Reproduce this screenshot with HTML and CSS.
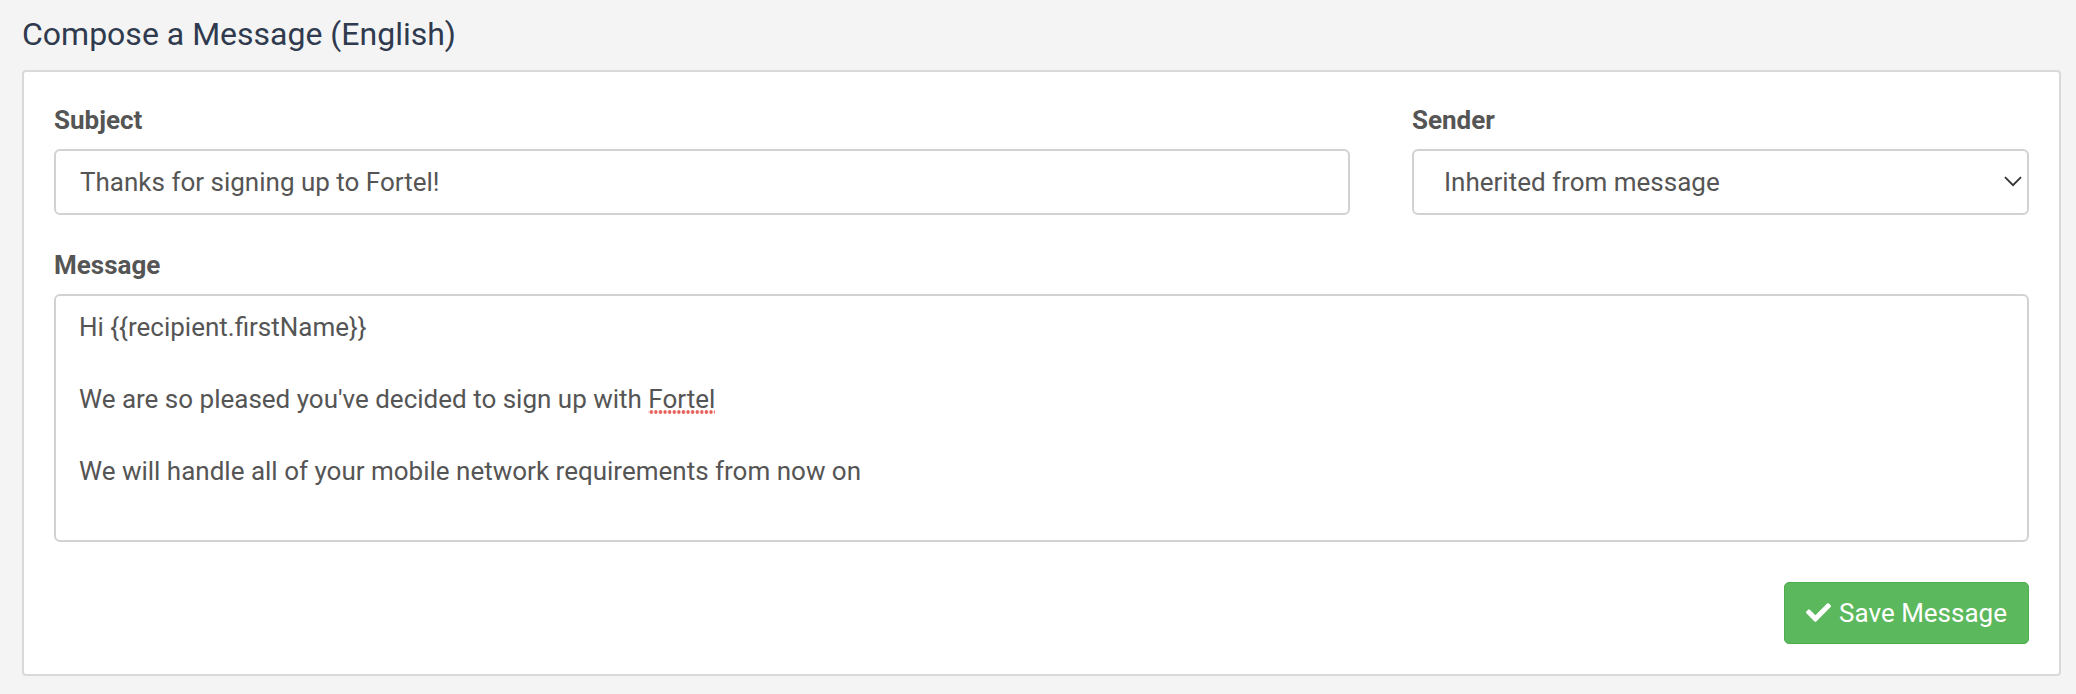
FILE: index.html
```html
<!DOCTYPE html>
<html lang="en">
<head>
<meta charset="utf-8">
<title>Compose a Message (English)</title>
<link rel="stylesheet" href="styles.css">
</head>
<body>
<div class="page">
  <h2 class="title">Compose a Message (English)</h2>
  <div class="card">
    <div class="top-row">
      <div class="field">
        <label class="label" for="subject">Subject</label>
        <input class="control input" id="subject" type="text" value="Thanks for signing up to Fortel!">
      </div>
      <div class="field">
        <label class="label" for="sender">Sender</label>
        <div class="select-wrap">
          <select class="control select" id="sender">
            <option>Inherited from message</option>
          </select>
          <svg class="chevron" width="18" height="11" viewBox="0 0 18 11" aria-hidden="true"><path d="M1 1.2 L9 9.2 L17 1.2" fill="none" stroke="#333" stroke-width="1.8"/></svg>
        </div>
      </div>
    </div>
    <div class="field field-message">
      <label class="label">Message</label>
      <div class="control textarea">Hi {{recipient.firstName}}

We are so pleased you've decided to sign up with <span class="misspelled">Fortel</span>

We will handle all of your mobile network requirements from now on</div>
    </div>
    <div class="actions">
      <button class="btn-save" type="button">
        <svg class="check" width="25" height="19" viewBox="0 64 512 384" aria-hidden="true"><path fill="#fff" d="M173.898 439.404l-166.4-166.4c-9.997-9.997-9.997-26.206 0-36.204l36.203-36.204c9.997-9.998 26.207-9.998 36.204 0L192 312.69 432.095 72.596c9.997-9.997 26.207-9.997 36.204 0l36.203 36.204c9.997 9.997 9.997 26.206 0 36.204l-294.4 294.401c-9.998 9.997-26.207 9.997-36.204-.001z"/></svg>
        <span>Save Message</span>
      </button>
    </div>
  </div>
</div>
</body>
</html>
```

FILE: styles.css
```css
* {
  box-sizing: border-box;
}

html,
body {
  margin: 0;
  padding: 0;
  background: #f4f4f4;
  font-family: Roboto, "Liberation Sans", Arial, sans-serif;
}

.page {
  padding: 15px 15px 18px 22px;
}

.title {
  margin: 0 0 17px 0;
  font-size: 32px;
  line-height: 38px;
  font-weight: 400;
  color: #2f3a4e;
}

.card {
  background: #fff;
  border: 2px solid #d9d9d9;
  border-radius: 4px;
  padding: 33px 30px 30px 30px;
}

.top-row {
  display: grid;
  grid-template-columns: 1296px 1fr;
  column-gap: 62px;
}

.field {
  display: flex;
  flex-direction: column;
}

.field-message {
  margin-top: 35px;
}

.label {
  display: block;
  margin-bottom: 14px;
  font-size: 26px;
  line-height: 30px;
  font-weight: 700;
  color: #555;
}

.control {
  font-family: Roboto, "Liberation Sans", Arial, sans-serif;
  font-size: 26px;
  color: #555;
  background: #fff;
  border: 2px solid #d2d2d2;
  border-radius: 6px;
  outline: none;
}

.input {
  width: 100%;
  height: 66px;
  padding: 0 24px;
}

.select-wrap {
  position: relative;
}

.select {
  width: 100%;
  height: 66px;
  padding: 0 50px 0 30px;
  appearance: none;
  -webkit-appearance: none;
}

.chevron {
  position: absolute;
  right: 7px;
  top: 27px;
  pointer-events: none;
}

.textarea {
  height: 248px;
  padding: 13px 23px;
  line-height: 36px;
  white-space: pre-wrap;
}

.misspelled {
  background-image: radial-gradient(circle, #e8605a 1.6px, transparent 2px);
  background-size: 4.6px 4px;
  background-repeat: repeat-x;
  background-position: 1px 100%;
}

.actions {
  display: flex;
  justify-content: flex-end;
  margin-top: 40px;
}

.btn-save {
  display: flex;
  align-items: center;
  gap: 8px;
  height: 62px;
  padding: 0 21px 0 21px;
  background: #5cb85c;
  border: 1px solid #4cae4c;
  border-radius: 5px;
  color: #fff;
  font-family: Roboto, "Liberation Sans", Arial, sans-serif;
  font-size: 26px;
  cursor: pointer;
}

.check {
  display: block;
  margin-top: -1px;
}
```
